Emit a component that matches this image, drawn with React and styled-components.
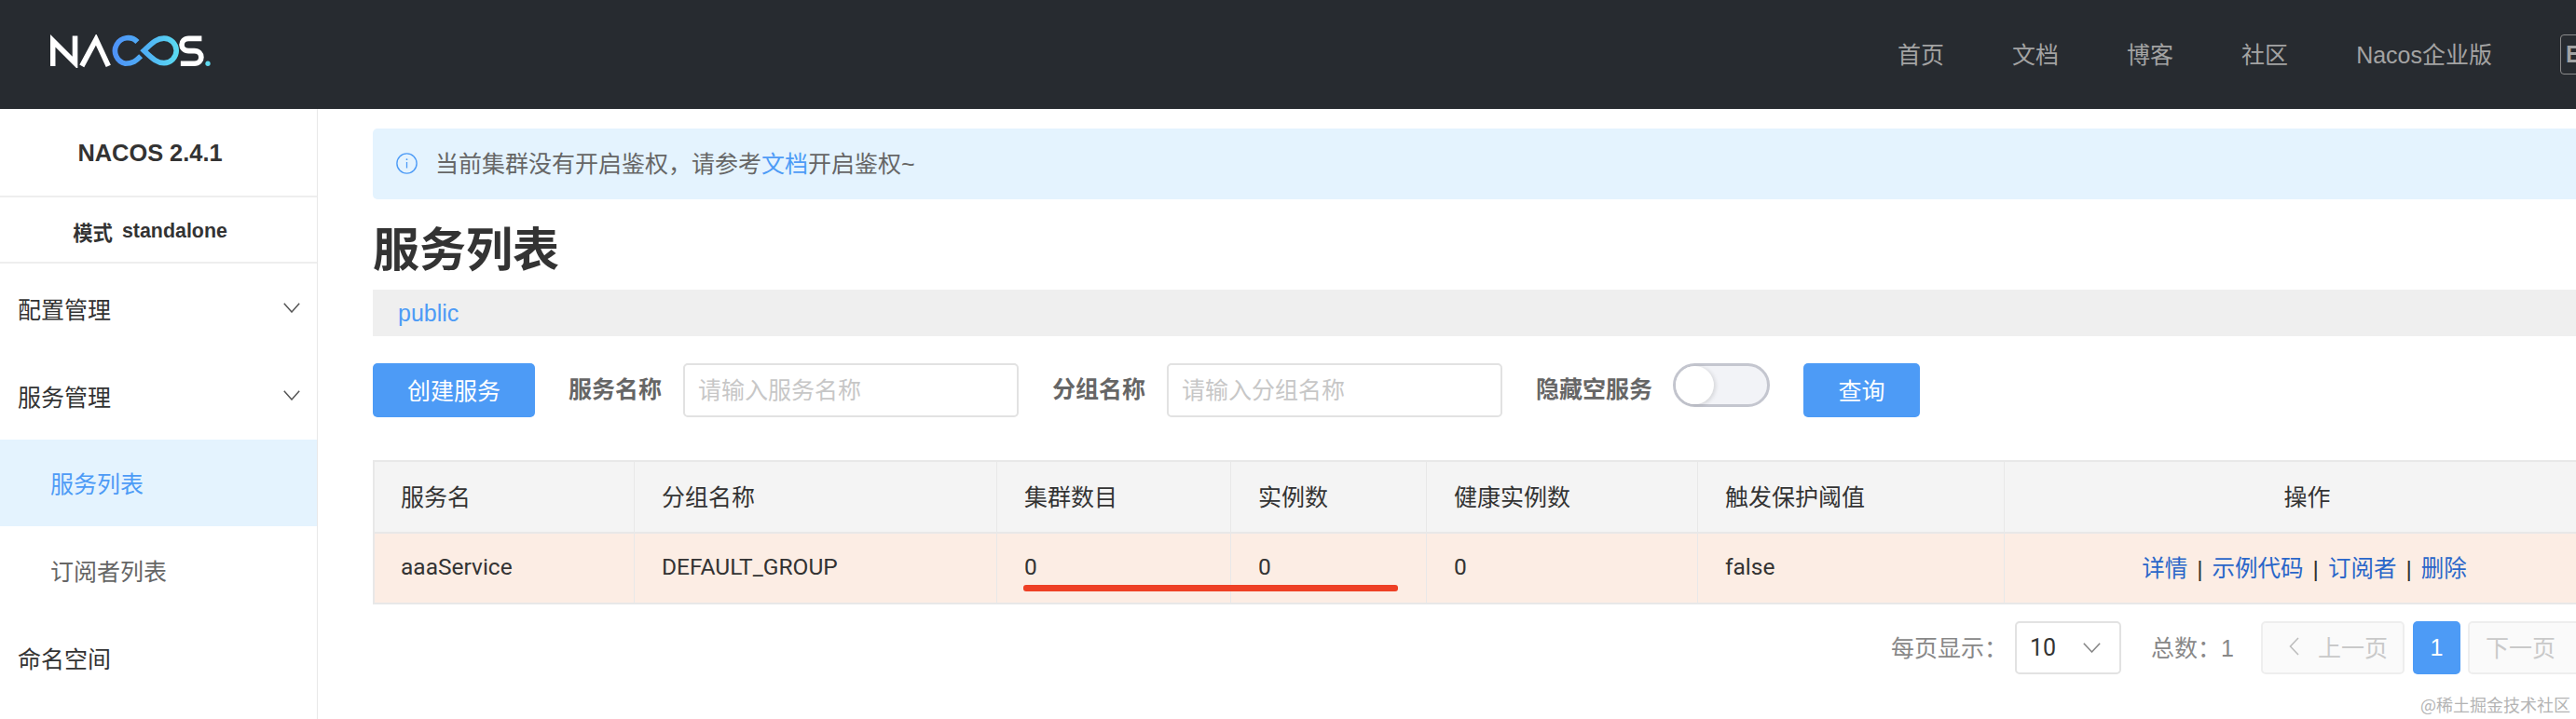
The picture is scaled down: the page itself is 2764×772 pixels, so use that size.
import React from 'react';
import styled, { createGlobalStyle } from 'styled-components';

const SANS = '"Liberation Sans", "Noto Sans CJK SC", sans-serif';
const ROBOTO = 'Roboto, "Noto Sans CJK SC", sans-serif';
const BLUE = '#4d9bf6';
const COMMA = '\uFF0C';
const COLON = '\uFF1A';

const Global = createGlobalStyle`
  html, body { margin: 0; padding: 0; background: #fff; }
  #root { width: 2764px; height: 772px; overflow: hidden; position: relative; }
  * { box-sizing: border-box; }
`;

const Page = styled.div`
  width: 2830px;
  height: 772px;
  font-family: ${SANS};
  font-size: 25px;
  color: #333;
  display: flex;
  flex-direction: column;
`;

const Header = styled.header`
  height: 117px;
  flex: none;
  background: #272b30;
  display: flex;
  align-items: center;
  padding: 0 23px 0 54px;
`;

const LogoSvg = styled.svg`
  width: 174px;
  height: 36px;
  flex: none;
  margin-bottom: 8px;
`;

const Nav = styled.nav`
  margin-left: auto;
  display: flex;
  align-items: center;
  gap: 73px;
  color: #a3a3a3;
  font-size: 25px;
`;

const NavItem = styled.span`
  line-height: 30px;
`;

const Lang = styled.span`
  width: 60px;
  height: 43px;
  border: 1px solid #8b8b8b;
  border-radius: 4px;
  display: flex;
  align-items: center;
  padding-left: 5px;
  font-size: 25px;
  font-weight: 700;
`;

const Body = styled.div`
  flex: 1;
  display: flex;
  min-height: 0;
`;

const Sidebar = styled.aside`
  width: 341px;
  flex: none;
  border-right: 1px solid #e8e8e8;
`;

const Version = styled.div`
  height: 95px;
  border-bottom: 2px solid #eeeeee;
  display: flex;
  align-items: center;
  justify-content: center;
  font-weight: 700;
  font-size: 25.4px;
  padding: 2px 18px 0 0;
  color: #333;
`;

const Mode = styled.div`
  height: 71px;
  border-bottom: 2px solid #eeeeee;
  display: flex;
  align-items: center;
  justify-content: center;
  font-weight: 700;
  font-size: 21.4px;
  padding: 4px 18px 0 0;
  gap: 10px;
`;

const Menu = styled.ul`
  list-style: none;
  margin: 0;
  padding: 1px 0 0;
`;

const MenuItem = styled.li`
  height: 93.75px;
  display: flex;
  align-items: center;
  justify-content: space-between;
  padding: 0 18px 0 ${(p) => (p.$sub ? 54 : 19)}px;
  background: ${(p) => (p.$active ? '#e4f3fe' : 'transparent')};
  color: ${(p) => (p.$active ? BLUE : p.$sub ? '#666' : '#333')};
`;

const Main = styled.main`
  width: 2463px;
  flex: none;
  padding: 21px 0 0 59px;
  position: relative;
`;

const Alert = styled.div`
  height: 76px;
  background: #e4f3fe;
  border-radius: 5px;
  display: flex;
  align-items: center;
  padding: 0 0 5px 25px;
  gap: 19px;
  color: #666;
`;

const InfoSvg = styled.svg`
  margin-top: 3px;
  flex: none;
`;

const Link = styled.span`
  color: ${BLUE};
`;

const Title = styled.h1`
  margin: 0;
  height: 97px;
  padding-top: 3px;
  display: flex;
  align-items: center;
  font-size: 50px;
  font-weight: 700;
  color: #333;
`;

const NamespaceBar = styled.div`
  height: 50px;
  background: #efefef;
  display: flex;
  align-items: center;
  padding-left: 27px;
  color: ${BLUE};
`;

const Toolbar = styled.div`
  margin-top: 29px;
  display: flex;
  gap: 36px;
  align-items: flex-start;
`;

const Button = styled.button`
  height: 58px;
  width: ${(p) => p.$w}px;
  border: 0;
  border-radius: 5px;
  background: ${BLUE};
  color: #fff;
  font: inherit;
  padding: 0 0 3px;
`;

const FormItem = styled.div`
  display: flex;
  align-items: center;
  gap: ${(p) => p.$gap || 23}px;
  height: 58px;
`;

const Label = styled.label`
  font-weight: 700;
  color: #666;
  line-height: 58px;
  margin-top: -3px;
`;

const Input = styled.div`
  width: 360px;
  height: 58px;
  border: 2px solid #e2e2e2;
  border-radius: 5px;
  color: #c7c7c7;
  display: flex;
  align-items: center;
  padding: 0 0 5px 14px;
`;

const Toggle = styled.div`
  width: 104px;
  height: 47px;
  border: 3px solid #c4c6cf;
  border-radius: 24px;
  background: #f2f3f7;
  display: flex;
  margin-bottom: 11px;
`;

const Knob = styled.div`
  width: 41px;
  height: 41px;
  border-radius: 50%;
  background: #fff;
  box-shadow: 2px 1px 4px rgba(0, 0, 0, 0.12);
`;

const TableWrap = styled.div`
  margin-top: 46px;
  position: relative;
`;

const Grid = styled.div`
  display: grid;
  grid-template-columns: 279px 389px 251px 210px 291px 329px 644px;
  border-top: 2px solid #e8e8e8;
  border-left: 2px solid #e8e8e8;
`;

const Cell = styled.div`
  height: 76.5px;
  display: flex;
  align-items: center;
  justify-content: flex-start;
  padding: 0 0 3px ${(p) => (p.$first ? 28 : 29)}px;
  border-right: 1px solid #e8e8e8;
  border-bottom: 2px solid #e8e8e8;
  background: ${(p) => (p.$head ? '#f4f4f4' : '#fcede4')};
  font-family: ${(p) => (p.$head ? SANS : ROBOTO)};
  font-size: ${(p) => (p.$head ? 25 : 24.5)}px;
`;

const CenterCell = styled(Cell)`
  justify-content: center;
  padding-left: ${(p) => (p.$head ? 6 : 0)}px;
`;

const Ops = styled.span`
  font-family: ${SANS};
  white-space: pre;
  color: #333;
`;

const OpLink = styled.span`
  color: #2a66c9;
`;

const OpSep = styled.span`
  margin: 0 10px;
`;

const Underline = styled.div`
  position: absolute;
  left: 698px;
  top: 134px;
  width: 402px;
  height: 7px;
  border-radius: 3px;
  background: #ee4025;
`;

const Pagination = styled.div`
  margin-top: 18px;
  padding-right: 2px;
  display: flex;
  justify-content: flex-end;
  align-items: center;
  height: 57px;
`;

const PageLabel = styled.span`
  color: #888;
  margin-right: ${(p) => p.$mr}px;
  padding-bottom: 3px;
`;

const SizeSelect = styled.div`
  width: 114px;
  height: 57px;
  border: 2px solid #e2e2e2;
  border-radius: 5px;
  display: flex;
  align-items: center;
  justify-content: space-between;
  padding: 0 20px 0 14px;
  margin-right: 32px;
  font-family: ${ROBOTO};
  color: #333;
`;

const PageButton = styled.div`
  width: 154px;
  height: 57px;
  flex: none;
  border: 2px solid #eeeeee;
  border-radius: 5px;
  background: #fafafa;
  color: #c9c9c9;
  display: flex;
  align-items: center;
  gap: ${(p) => p.$gap}px;
  padding: 0 0 3px ${(p) => p.$pl}px;
`;

const CurrentPage = styled.div`
  width: 51px;
  height: 57px;
  flex: none;
  margin: 0 8px 0 9px;
  border-radius: 5px;
  background: ${BLUE};
  color: #fff;
  display: flex;
  align-items: center;
  justify-content: center;
`;

const Watermark = styled.div`
  position: absolute;
  left: 2597px;
  top: 741px;
  font-size: 18px;
  line-height: 30px;
  color: #b4b4b4;
  white-space: nowrap;
  font-family: "Noto Sans CJK SC", sans-serif;
`;

const Chevron = ({ w = 18, h = 11, color = '#555' }) => (
  <svg width={w} height={h} viewBox="0 0 18 11" fill="none" preserveAspectRatio="none">
    <path d="M0.8 0.8 L9 10 L17.2 0.8" stroke={color} strokeWidth="1.5" />
  </svg>
);

const SideChevron = ({ color = '#bdbdbd', dir = 'left' }) => (
  <svg width="11" height="20" viewBox="0 0 11 20" fill="none">
    <path d={dir === 'left' ? 'M10 1 L1.5 10 L10 19' : 'M1 1 L9.5 10 L1 19'} stroke={color} strokeWidth="1.6" />
  </svg>
);

const Logo = () => (
  <LogoSvg viewBox="102 80 525 108">
    <defs>
      <linearGradient id="inf" x1="298" y1="0" x2="520" y2="0" gradientUnits="userSpaceOnUse">
        <stop offset="0" stopColor="#4e8ff7" />
        <stop offset="0.5" stopColor="#4fb0f5" />
        <stop offset="1" stopColor="#5bdcf0" />
      </linearGradient>
    </defs>
    <g fill="none" stroke="#fff" strokeWidth="17">
      <path d="M110 182 V100 L182 172 V84" />
      <path d="M204 182 L250 96 L290 182" />
      <path d="M592 93 H550 C520 93 520 133 550 133 H568 C598 133 598 174 568 174 H524" />
    </g>
    <g fill="none" stroke="url(#inf)" strokeWidth="17">
      <path d="M384 104 A42 42 0 1 0 345 174 C368 174 380 165 395 150" />
      <path d="M470 92 A40 40 0 1 1 470 172 C445 172 430 155 405 132 C430 109 445 92 470 92 Z" />
    </g>
    <circle cx="612" cy="174" r="8" fill="#5fd8ee" />
  </LogoSvg>
);

const InfoIcon = () => (
  <InfoSvg width="23" height="23" viewBox="0 0 23 23" fill="none">
    <circle cx="11.5" cy="11.5" r="10.6" stroke={BLUE} strokeWidth="1.4" />
    <circle cx="11.5" cy="7.2" r="0.9" fill={BLUE} />
    <path d="M11.5 10 V16.5" stroke={BLUE} strokeWidth="1.3" />
  </InfoSvg>
);

const heads = ['服务名', '分组名称', '集群数目', '实例数', '健康实例数', '触发保护阈值'];
const values = ['aaaService', 'DEFAULT_GROUP', '0', '0', '0', 'false'];

export default function App() {
  return (
    <>
      <Global />
      <Page>
        <Header>
          <Logo />
          <Nav>
            <NavItem>首页</NavItem>
            <NavItem>文档</NavItem>
            <NavItem>博客</NavItem>
            <NavItem>社区</NavItem>
            <NavItem>Nacos企业版</NavItem>
            <Lang>En</Lang>
          </Nav>
        </Header>
        <Body>
          <Sidebar>
            <Version>NACOS 2.4.1</Version>
            <Mode>
              <span>模式</span>
              <span>standalone</span>
            </Mode>
            <Menu>
              <MenuItem>配置管理<Chevron /></MenuItem>
              <MenuItem>服务管理<Chevron /></MenuItem>
              <MenuItem $sub $active>服务列表</MenuItem>
              <MenuItem $sub>订阅者列表</MenuItem>
              <MenuItem>命名空间</MenuItem>
            </Menu>
          </Sidebar>
          <Main>
            <Alert>
              <InfoIcon />
              <span>当前集群没有开启鉴权{COMMA}请参考<Link>文档</Link>开启鉴权~</span>
            </Alert>
            <Title>服务列表</Title>
            <NamespaceBar>public</NamespaceBar>
            <Toolbar>
              <Button $w={174}>创建服务</Button>
              <FormItem>
                <Label>服务名称</Label>
                <Input>请输入服务名称</Input>
              </FormItem>
              <FormItem>
                <Label>分组名称</Label>
                <Input>请输入分组名称</Input>
              </FormItem>
              <FormItem $gap={22}>
                <Label>隐藏空服务</Label>
                <Toggle><Knob /></Toggle>
              </FormItem>
              <Button $w={125}>查询</Button>
            </Toolbar>
            <TableWrap>
              <Grid>
                {heads.map((h, i) => <Cell key={h} $head $first={i === 0}>{h}</Cell>)}
                <CenterCell $head>操作</CenterCell>
                {values.map((v, i) => <Cell key={i} $first={i === 0}>{v}</Cell>)}
                <CenterCell>
                  <Ops>
                    <OpLink>详情</OpLink><OpSep>|</OpSep><OpLink>示例代码</OpLink><OpSep>|</OpSep><OpLink>订阅者</OpLink><OpSep>|</OpSep><OpLink>删除</OpLink>
                  </Ops>
                </CenterCell>
              </Grid>
              <Underline />
            </TableWrap>
            <Pagination>
              <PageLabel $mr={8}>每页显示{COLON}</PageLabel>
              <SizeSelect>10<Chevron w={19} h={11} color="#888" /></SizeSelect>
              <PageLabel $mr={29}>总数{COLON}1</PageLabel>
              <PageButton $pl={28} $gap={20}>
                <SideChevron />
                上一页
              </PageButton>
              <CurrentPage>1</CurrentPage>
              <PageButton $pl={17} $gap={22}>
                下一页
                <SideChevron dir="right" />
              </PageButton>
            </Pagination>
          </Main>
        </Body>
      </Page>
      <Watermark>@稀土掘金技术社区</Watermark>
    </>
  );
}
